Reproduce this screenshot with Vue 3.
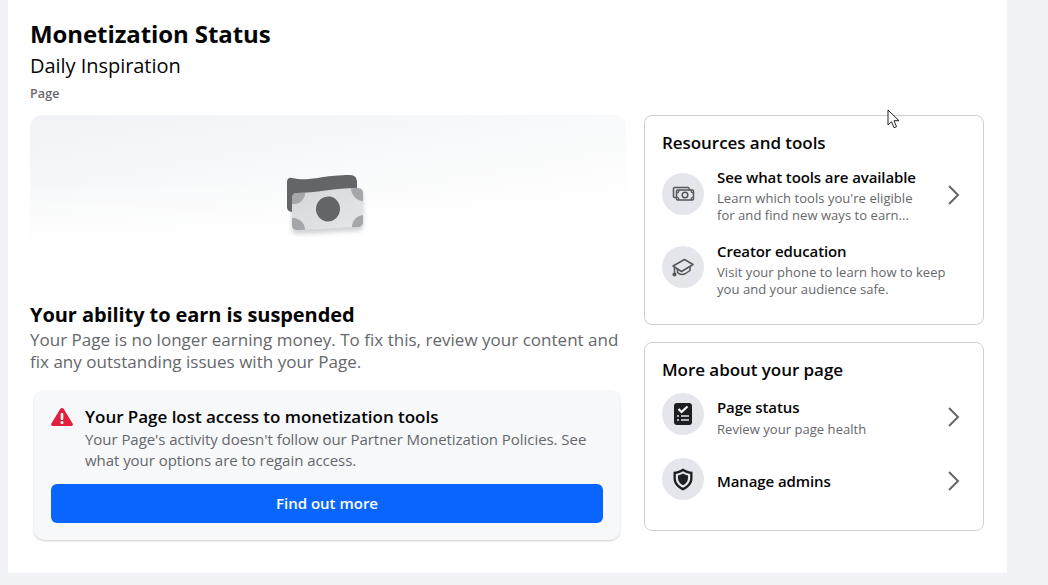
<script setup>
const resources = [
  { title: 'See what tools are available', lines: ["Learn which tools you're eligible", 'for and find new ways to earn...'], icon: 'money', chevron: true },
  { title: 'Creator education', lines: ['Visit your phone to learn how to keep', 'you and your audience safe.'], icon: 'cap', chevron: false },
]
const more = [
  { title: 'Page status', lines: ['Review your page health'], icon: 'status' },
  { title: 'Manage admins', lines: [], icon: 'shield' },
]
</script>

<template>
  <div class="page">
    <main class="panel">
      <header class="head">
        <h1>Monetization Status</h1>
        <div class="name">Daily Inspiration</div>
        <div class="kind">Page</div>
      </header>
      <div class="cols">
        <section class="left">
          <div class="hero">
            <svg class="bills" width="84" height="66" viewBox="0 0 84 66">
              <defs>
                <filter id="blur" x="-10%" y="-10%" width="120%" height="125%"><feGaussianBlur stdDeviation="0.7" /></filter>
                <filter id="soft" x="-15%" y="-15%" width="130%" height="140%"><feGaussianBlur stdDeviation="2" /></filter>
                <linearGradient id="bill" x1="0" y1="0" x2="1" y2="1"><stop offset="0" stop-color="#d4d6d8" /><stop offset="1" stop-color="#e6e7e9" /></linearGradient>
                <clipPath id="billClip"><path d="M6 27c0-3 2-5 5-5 18 0 38-5 60-5 4 0 6 2 6 6v28c0 3-2 5-5 5-20 0-38 3-60 3-4 0-6-2-6-5z" /></clipPath>
              </defs>
              <path d="M6 29c0-3 2-5 5-5 18 0 38-5 60-5 4 0 6 2 6 6v30c0 3-2 5-5 5-20 0-38 3-60 3-4 0-6-2-6-5z" fill="#9a9c9f" opacity="0.45" filter="url(#soft)" />
              <g filter="url(#blur)">
                <path d="M1 11c0-3 2-5 5-4 20 4 28-3 58-3 5 0 7 3 7 7v30H8c-4 0-7-1-7-5z" fill="#636568" />
                <path d="M6 27c0-3 2-5 5-5 18 0 38-5 60-5 4 0 6 2 6 6v28c0 3-2 5-5 5-20 0-38 3-60 3-4 0-6-2-6-5z" fill="url(#bill)" />
                <g clip-path="url(#billClip)" fill="#a5a6a9">
                  <circle cx="8" cy="22" r="11" />
                  <circle cx="78" cy="17" r="13" />
                  <circle cx="7" cy="59" r="12" />
                  <circle cx="78" cy="56" r="12" />
                </g>
                <ellipse cx="42" cy="38" rx="12" ry="12.500" fill="#636568" transform="rotate(8 42 38)" />
              </g>
            </svg>
          </div>
          <h2 class="suspended">Your ability to earn is suspended</h2>
          <p class="lead">Your Page is no longer earning money. To fix this, review your content and fix any outstanding issues with your Page.</p>
          <div class="alert">
            <div class="alert-top">
              <svg class="warn" width="22" height="18" viewBox="0 0 22 18">
                <path d="M11 0c.8 0 1.400.4 1.800 1.100l8.800 14.300c.8 1.300 0 2.600-1.500 2.600H1.900C.4 18-.4 16.700.4 15.400L9.200 1.100C9.600.4 10.200 0 11 0z" fill="#e41e3f" />
                <rect x="9.700" y="5" width="2.600" height="7" rx="1" fill="#fff" />
                <circle cx="11" cy="14.500" r="1.500" fill="#fff" />
              </svg>
              <div>
                <h3>Your Page lost access to monetization tools</h3>
                <p>Your Page's activity doesn't follow our Partner Monetization Policies. See what your options are to regain access.</p>
              </div>
            </div>
            <button class="cta">Find out more</button>
          </div>
        </section>
        <aside class="right">
          <section class="card resources">
            <h2>Resources and tools</h2>
            <div class="rows">
              <div v-for="r in resources" :key="r.title" class="row">
                <span class="badge">
                  <svg v-if="r.icon === 'money'" width="24" height="24" viewBox="0 0 24 24" fill="none" stroke="#55565a" stroke-width="1.500">
                    <path d="M5 15.500H3.500a1 1 0 0 1-1-1V6.500a1 1 0 0 1 1-1H17a1 1 0 0 1 1 1V8" />
                    <rect x="5.500" y="8" width="17" height="10" rx="1.200" fill="#e4e6eb" />
                    <circle cx="14" cy="13" r="2.800" />
                    <path d="M5.500 11c1.500 0 2.500-1 2.500-3M20 8c0 2 1 3 2.500 3M5.500 15c1.500 0 2.500 1 2.500 3M20 18c0-2 1-3 2.500-3" stroke-width="1.200" />
                  </svg>
                  <svg v-else width="24" height="24" viewBox="0 0 24 24" fill="none" stroke="#55565a" stroke-width="1.500" stroke-linejoin="round">
                    <path d="M2 11 13.500 4.500 22 9.500l-11.500 7z" />
                    <path d="M6.500 14v3.500c2 2 5.500 2.300 8 1l4.500-3v-4.500" />
                    <path d="M3.500 12V18" />
                    <circle cx="3.500" cy="19.500" r="1.300" fill="#55565a" />
                  </svg>
                </span>
                <div class="text">
                  <div class="title">{{ r.title }}</div>
                  <div v-for="(l, i) in r.lines" :key="l" class="sub" :class="{ first: i === 0 }">{{ l }}</div>
                </div>
                <svg v-if="r.chevron" class="chev" width="14" height="22" viewBox="0 0 14 22" fill="none" stroke="#65676b" stroke-width="2">
                  <path d="M2 2l9 9-9 9" />
                </svg>
              </div>
            </div>
          </section>
          <section class="card more">
            <h2>More about your page</h2>
            <div class="rows">
              <div v-for="r in more" :key="r.title" class="row center">
                <span class="badge">
                  <svg v-if="r.icon === 'status'" width="24" height="24" viewBox="0 0 24 24">
                    <rect x="3" y="1" width="18" height="22" rx="3" fill="#1c1e21" />
                    <path d="M7.500 7l3 3 6-5.500" fill="none" stroke="#fff" stroke-width="2.200" />
                    <path d="M6 14h2M10 14h8M6 18h2M10 18h8" stroke="#e4e6eb" stroke-width="1.400" />
                  </svg>
                  <svg v-else width="24" height="24" viewBox="0 0 24 24">
                    <path d="M12 1.500c3 2 6 3 9.500 3.300V11c0 6-4 10-9.500 12.500C6.500 21 2.500 17 2.500 11V4.800C6 4.500 9 3.500 12 1.500z" fill="#1c1e21" />
                    <path d="M12 4.300c2.300 1.400 4.500 2.200 7.200 2.600V11c0 4.600-3 7.700-7.200 9.800-4.200-2.100-7.200-5.200-7.200-9.800V6.900c2.700-.4 4.900-1.200 7.200-2.600z" fill="#e4e6eb" />
                    <path d="M12 6.500c1.800 1 3.300 1.600 5 1.900V11c0 3.300-2 5.600-5 7.300-3-1.700-5-4-5-7.300V8.400c1.700-.3 3.200-.9 5-1.900z" fill="#1c1e21" />
                  </svg>
                </span>
                <div class="text">
                  <div class="title">{{ r.title }}</div>
                  <div v-for="(l, i) in r.lines" :key="l" class="sub" :class="{ first: i === 0 }">{{ l }}</div>
                </div>
                <svg class="chev" width="14" height="22" viewBox="0 0 14 22" fill="none" stroke="#65676b" stroke-width="2">
                  <path d="M2 2l9 9-9 9" />
                </svg>
              </div>
            </div>
          </section>
        </aside>
      </div>
      <svg class="cursor" width="14" height="21" viewBox="0 0 14 21">
        <path d="M1 1v15l3.500-3.300 2.500 6 2.500-1-2.500-6H12z" fill="#fff" stroke="#222" stroke-width="1" />
      </svg>
    </main>
  </div>
</template>

<style>
html, body { margin: 0; background: #f0f2f5; }
</style>

<style scoped>
.page {
  width: 1048px;
  height: 585px;
  box-sizing: border-box;
  padding-left: 8px;
  background: #f0f2f5;
  overflow: hidden;
  font-family: "Open Sans", "Noto Sans", sans-serif;
  color: #050505;
}
.panel {
  position: relative;
  width: 999px;
  height: 573px;
  box-sizing: border-box;
  background: #fff;
  padding: 18px 23px 0 22px;
}
h1, h2, h3, p { margin: 0; }
h1 { font-size: 24px; line-height: 32px; font-weight: 700; letter-spacing: -0.09px; }
.name { font-size: 20px; line-height: 30px; letter-spacing: -0.04px; margin-top: 1px; }
.kind { font-size: 12.500px; line-height: 20px; font-weight: 600; color: #65676b; margin-top: 3px; letter-spacing: 0.1px; }
.cols { display: flex; gap: 18px; margin-top: 11px; }
.left { width: 596px; flex: none; }
.hero {
  height: 146px;
  box-sizing: border-box;
  border-radius: 12px 12px 0 0;
  background:
    linear-gradient(rgba(255, 255, 255, 0) 45%, #ffffff 100%),
    linear-gradient(170deg, #f1f2f5 0%, #f8f9fa 38%, #ffffff 80%);
  display: flex;
  justify-content: center;
  padding-top: 56px;
}
.bills { display: block; }
.suspended { font-size: 20px; line-height: 26px; font-weight: 700; margin-top: 41px; letter-spacing: -0.08px; }
.lead { font-size: 17px; line-height: 22px; color: #65676b; margin-top: 1px; letter-spacing: 0.02px; }
.alert {
  width: 586px;
  margin: 17px 0 0 4px;
  height: 150px;
  box-sizing: border-box;
  background: #f7f8fa;
  border-radius: 10px;
  box-shadow: 0 1px 2px rgba(0, 0, 0, 0.2);
  padding: 15px 17px;
}
.alert-top { display: flex; gap: 12px; }
.warn { margin-top: 3px; flex: none; }
.alert h3 { font-size: 17px; line-height: 24px; font-weight: 600; letter-spacing: -0.03px; }
.alert p { font-size: 15px; line-height: 21px; color: #65676b; letter-spacing: -0.05px; }
.cta {
  display: block;
  width: 100%;
  height: 39px;
  margin-top: 13px;
  padding: 0 0 2px;
  border: 0;
  border-radius: 6px;
  background: #0866ff;
  color: #fff;
  font: 600 15px "Open Sans", sans-serif;
}
.right { width: 340px; flex: none; display: flex; flex-direction: column; gap: 17px; }
.card {
  box-sizing: border-box;
  border: 1px solid #ced0d4;
  border-radius: 8px;
  padding: 14px 17px 0;
}
.resources { height: 210px; }
.more { height: 189px; }
.card h2 { font-size: 17px; line-height: 26px; font-weight: 600; letter-spacing: -0.05px; }
.rows { display: flex; flex-direction: column; }
.resources .rows { gap: 16px; margin-top: 10px; }
.more .rows { gap: 22px; margin-top: 13px; }
.row { display: flex; align-items: center; gap: 13px; }
.row.center { min-height: 42px; }
.badge {
  width: 42px;
  height: 42px;
  flex: none;
  border-radius: 50%;
  background: #e4e6eb;
  display: flex;
  align-items: center;
  justify-content: center;
}
.resources .badge { align-self: flex-start; margin-top: 6px; }
.resources .row:first-child .badge { margin-top: 7px; }
.more .row:first-child .badge { margin-top: -6px; }
.more .row:last-child .badge { margin-top: -5px; }
.text { flex: 1; min-width: 0; }
.title { font-size: 15px; line-height: 22px; font-weight: 600; letter-spacing: -0.1px; }
.more .row:first-child .title { margin-top: -1px; }
.sub { font-size: 13px; line-height: 17px; color: #65676b; letter-spacing: 0.05px; }
.sub.first { margin-top: 2px; }
.more .sub.first { margin-top: 3px; }
.chev { flex: none; margin-right: 5px; }
.cursor { position: absolute; left: 879px; top: 109px; }
</style>
